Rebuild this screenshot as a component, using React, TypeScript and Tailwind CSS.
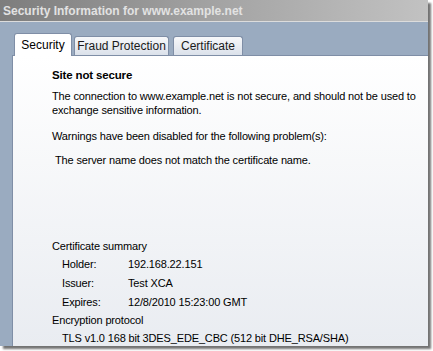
const font = { fontFamily: "'Liberation Sans', Arial, sans-serif" };

function Tab({ label, active }: { label: string; active?: boolean }) {
  if (active) {
    return (
      <div className="relative z-10 -mb-px flex h-[23px] w-[58px] items-center justify-center rounded-t-[3px] border border-b-0 border-[#7f8ea6] bg-white text-[12px] text-black">
        {label}
      </div>
    );
  }
  return (
    <div className="mt-[3px] flex h-[19px] items-center justify-center rounded-t-[3px] border border-b-0 border-[#7f8ea6] bg-gradient-to-b from-[#f7f8fa] to-[#dbe1ea] text-[12px] text-[#1a1a1a]">
      {label}
    </div>
  );
}

export default function App() {
  return (
    <div className="h-[351px] w-[433px] bg-white" style={font}>
      <div className="flex h-[346px] w-[428px] flex-col shadow-[3px_3px_2px_rgba(0,0,0,0.55)]">
        {/* title bar */}
        <div className="flex h-[22px] items-center border-b border-[#dcdcdc] bg-gradient-to-r from-[#7d7d7d] via-[#a3a3a3] to-[#c2c2c2] px-[3px]">
          <span className="text-[12px] font-bold text-[#e2e2e2]">Security Information for www.example.net</span>
        </div>

        <div className="flex flex-1 flex-col bg-[#9aabc0] pl-[12px]">
          {/* tabs */}
          <div className="mt-[11px] flex items-end pl-[2px]">
            <Tab label="Security" active />
            <div className="ml-[2px] w-[95px]"><Tab label="Fraud Protection" /></div>
            <div className="ml-[4px] w-[70px]"><Tab label="Certificate" /></div>
          </div>

          {/* panel */}
          <div className="flex-1 border-l border-t border-[#7f8ea6] bg-gradient-to-b from-white to-[#e9ecf1] pl-[39px] pt-[12px] text-[11px] leading-[14px] tracking-[-0.15px] text-black">
            <div className="text-[11.5px] font-bold">Site not secure</div>
            <div className="mt-[7px]">
              The connection to www.example.net is not secure, and should not be used to exchange sensitive information.
            </div>
            <div className="mt-[12px]">Warnings have been disabled for the following problem(s):</div>
            <div className="mt-[10px] pl-[3px]">The server name does not match the certificate name.</div>

            <div className="mt-[72px]">Certificate summary</div>
            <div className="mt-[4px] grid grid-cols-[66px_1fr] gap-y-[5px] pl-[10px]">
              <span>Holder:</span>
              <span>192.168.22.151</span>
              <span>Issuer:</span>
              <span>Test XCA</span>
              <span>Expires:</span>
              <span>12/8/2010 15:23:00 GMT</span>
            </div>
            <div className="mt-[4px]">Encryption protocol</div>
            <div className="mt-[4px] pl-[10px]">TLS v1.0 168 bit 3DES_EDE_CBC (512 bit DHE_RSA/SHA)</div>
          </div>
        </div>
      </div>
    </div>
  );
}
